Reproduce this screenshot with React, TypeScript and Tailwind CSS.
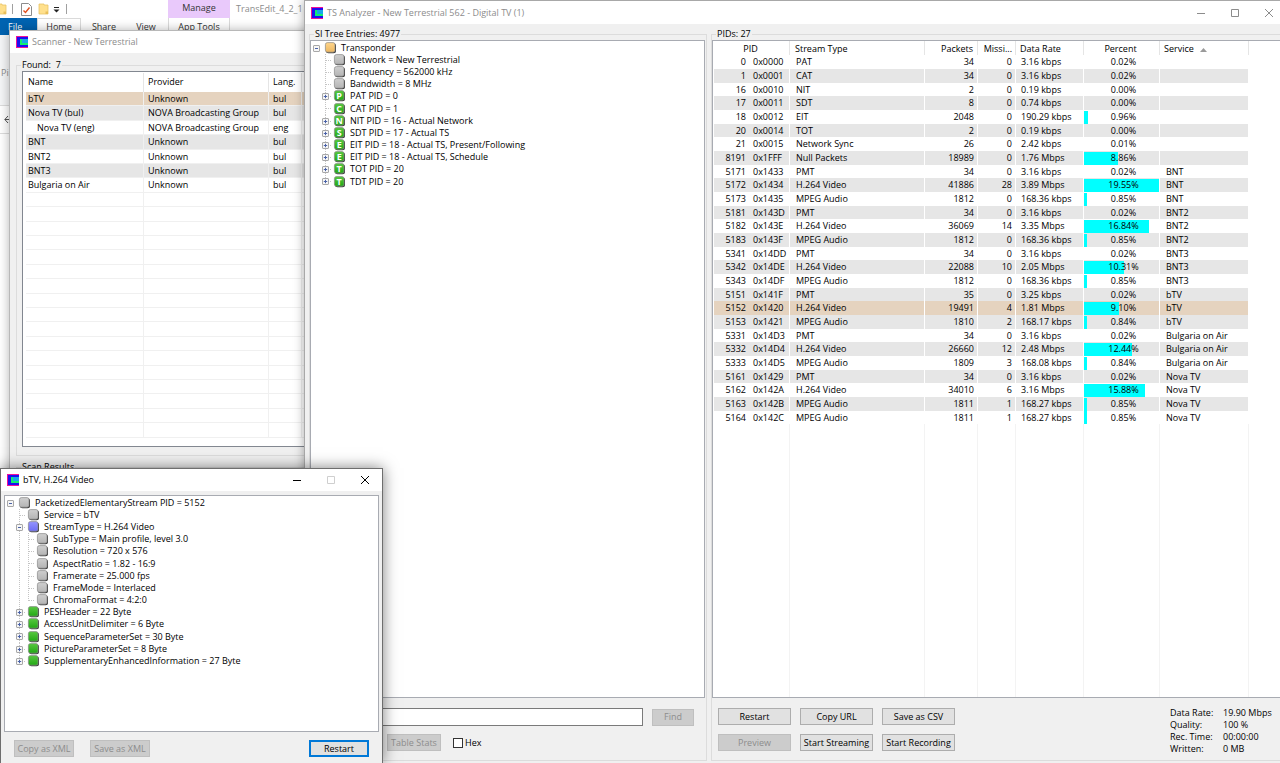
import type { ReactNode } from "react";

type Entry = {
  depth: number;
  text: string;
  color?: "gray" | "green" | "blue" | "orange";
  letter?: string;
  toggle?: "+" | "-";
  last?: boolean;
};

const siTree: Entry[] = [
  { depth: 0, text: "Transponder", color: "orange", toggle: "-" },
  { depth: 1, text: "Network = New Terrestrial" },
  { depth: 1, text: "Frequency = 562000 kHz" },
  { depth: 1, text: "Bandwidth = 8 MHz" },
  { depth: 1, text: "PAT PID = 0", color: "green", letter: "P", toggle: "+" },
  { depth: 1, text: "CAT PID = 1", color: "green", letter: "C" },
  { depth: 1, text: "NIT PID = 16 - Actual Network", color: "green", letter: "N", toggle: "+" },
  { depth: 1, text: "SDT PID = 17 - Actual TS", color: "green", letter: "S", toggle: "+" },
  { depth: 1, text: "EIT PID = 18 - Actual TS, Present/Following", color: "green", letter: "E", toggle: "+" },
  { depth: 1, text: "EIT PID = 18 - Actual TS, Schedule", color: "green", letter: "E", toggle: "+" },
  { depth: 1, text: "TOT PID = 20", color: "green", letter: "T", toggle: "+" },
  { depth: 1, text: "TDT PID = 20", color: "green", letter: "T", toggle: "+", last: true },
];

const streamTree: Entry[] = [
  { depth: 0, text: "PacketizedElementaryStream PID = 5152", toggle: "-" },
  { depth: 1, text: "Service = bTV" },
  { depth: 1, text: "StreamType = H.264 Video", color: "blue", toggle: "-" },
  { depth: 2, text: "SubType = Main profile, level 3.0" },
  { depth: 2, text: "Resolution = 720 x 576" },
  { depth: 2, text: "AspectRatio = 1.82 - 16:9" },
  { depth: 2, text: "Framerate = 25.000 fps" },
  { depth: 2, text: "FrameMode = Interlaced" },
  { depth: 2, text: "ChromaFormat = 4:2:0", last: true },
  { depth: 1, text: "PESHeader = 22 Byte", color: "green", toggle: "+" },
  { depth: 1, text: "AccessUnitDelimiter = 6 Byte", color: "green", toggle: "+" },
  { depth: 1, text: "SequenceParameterSet = 30 Byte", color: "green", toggle: "+" },
  { depth: 1, text: "PictureParameterSet = 8 Byte", color: "green", toggle: "+" },
  { depth: 1, text: "SupplementaryEnhancedInformation = 27 Byte", color: "green", toggle: "+", last: true },
];

// pid, hex, type, packets, missing, rate, percent, service
const pids: [number, string, string, number, number, string, string, string][] = [
  [0, "0x0000", "PAT", 34, 0, "3.16 kbps", "0.02", ""],
  [1, "0x0001", "CAT", 34, 0, "3.16 kbps", "0.02", ""],
  [16, "0x0010", "NIT", 2, 0, "0.19 kbps", "0.00", ""],
  [17, "0x0011", "SDT", 8, 0, "0.74 kbps", "0.00", ""],
  [18, "0x0012", "EIT", 2048, 0, "190.29 kbps", "0.96", ""],
  [20, "0x0014", "TOT", 2, 0, "0.19 kbps", "0.00", ""],
  [21, "0x0015", "Network Sync", 26, 0, "2.42 kbps", "0.01", ""],
  [8191, "0x1FFF", "Null Packets", 18989, 0, "1.76 Mbps", "8.86", ""],
  [5171, "0x1433", "PMT", 34, 0, "3.16 kbps", "0.02", "BNT"],
  [5172, "0x1434", "H.264 Video", 41886, 28, "3.89 Mbps", "19.55", "BNT"],
  [5173, "0x1435", "MPEG Audio", 1812, 0, "168.36 kbps", "0.85", "BNT"],
  [5181, "0x143D", "PMT", 34, 0, "3.16 kbps", "0.02", "BNT2"],
  [5182, "0x143E", "H.264 Video", 36069, 14, "3.35 Mbps", "16.84", "BNT2"],
  [5183, "0x143F", "MPEG Audio", 1812, 0, "168.36 kbps", "0.85", "BNT2"],
  [5341, "0x14DD", "PMT", 34, 0, "3.16 kbps", "0.02", "BNT3"],
  [5342, "0x14DE", "H.264 Video", 22088, 10, "2.05 Mbps", "10.31", "BNT3"],
  [5343, "0x14DF", "MPEG Audio", 1812, 0, "168.36 kbps", "0.85", "BNT3"],
  [5151, "0x141F", "PMT", 35, 0, "3.25 kbps", "0.02", "bTV"],
  [5152, "0x1420", "H.264 Video", 19491, 4, "1.81 Mbps", "9.10", "bTV"],
  [5153, "0x1421", "MPEG Audio", 1810, 2, "168.17 kbps", "0.84", "bTV"],
  [5331, "0x14D3", "PMT", 34, 0, "3.16 kbps", "0.02", "Bulgaria on Air"],
  [5332, "0x14D4", "H.264 Video", 26660, 12, "2.48 Mbps", "12.44", "Bulgaria on Air"],
  [5333, "0x14D5", "MPEG Audio", 1809, 3, "168.08 kbps", "0.84", "Bulgaria on Air"],
  [5161, "0x1429", "PMT", 34, 0, "3.16 kbps", "0.02", "Nova TV"],
  [5162, "0x142A", "H.264 Video", 34010, 6, "3.16 Mbps", "15.88", "Nova TV"],
  [5163, "0x142B", "MPEG Audio", 1811, 1, "168.27 kbps", "0.85", "Nova TV"],
  [5164, "0x142C", "MPEG Audio", 1811, 1, "168.27 kbps", "0.85", "Nova TV"],
];
const selectedPid = 5152;
const maxPercent = 19.55;

const channels = [
  ["bTV", "Unknown", "bul"],
  ["Nova TV (bul)", "NOVA Broadcasting Group", "bul"],
  ["Nova TV (eng)", "NOVA Broadcasting Group", "eng"],
  ["BNT", "Unknown", "bul"],
  ["BNT2", "Unknown", "bul"],
  ["BNT3", "Unknown", "bul"],
  ["Bulgaria on Air", "Unknown", "bul"],
];
const emptyRows = Array.from({ length: 17 }, (_, i) => i);

const stats = [
  ["Data Rate:", "19.90 Mbps"],
  ["Quality:", "100 %"],
  ["Rec. Time:", "00:00:00"],
  ["Written:", "0 MB"],
];

// light top, darker bottom
const nodeColors = {
  gray: ["#cfcfcf", "#b4b4b4"],
  green: ["#58c840", "#22a814"],
  blue: ["#9494ff", "#6c6cf4"],
  orange: ["#ffd68c", "#ecb660"],
};

function AppIcon() {
  return (
    <svg width="12" height="12" viewBox="0 0 12 12" shapeRendering="crispEdges" aria-hidden="true">
      <rect width="12" height="12" fill="#f0109a" />
      <rect x="1" y="1" width="11" height="10" fill="#1c10f0" />
      <rect x="4" y="3" width="8" height="6" fill="#10f070" />
      <rect x="6" y="3" width="6" height="4" fill="#18a8e8" />
    </svg>
  );
}

function Folder() {
  return (
    <svg width="11" height="12" viewBox="0 0 11 12" aria-hidden="true">
      <path d="M1 1h5v1h4v9H1z" fill="#ffe08c" stroke="#e8c468" strokeWidth="0.8" />
      <path d="M7.5 8.5H10V11H7.5z" fill="#e8bf58" />
    </svg>
  );
}

function WindowControls({ active }: { active?: boolean }) {
  return (
    <div className={`flex items-center gap-6 ${active ? "text-black" : "text-[#8c8c8c]"}`}>
      <button aria-label="Minimize">
        <svg className="block" width="10" height="10" viewBox="0 0 10 10" stroke="currentColor">
          <path d="M1 5.5h8" />
        </svg>
      </button>
      <button aria-label="Maximize" className={active ? "text-[#cfcfcf]" : ""}>
        <svg className="block" width="10" height="10" viewBox="0 0 10 10" fill="none" stroke="currentColor">
          <path d="M1.5 1.5h7v7h-7z" />
        </svg>
      </button>
      <button aria-label="Close">
        <svg className="block" width="10" height="10" viewBox="0 0 10 10" stroke="currentColor">
          <path d="M1 1l8 8M9 1L1 9" />
        </svg>
      </button>
    </div>
  );
}

function Toggle({ sign }: { sign: "+" | "-" }) {
  return (
    <svg className="relative block" width="9" height="12" viewBox="0 0 9 12" aria-hidden="true">
      <rect x="1.5" y="3.5" width="6" height="6" rx="0.5" fill="#f6f6f6" stroke="#a8a8a8" />
      <path d={sign === "+" ? "M2.8 6.5h3.4M4.5 4.8v3.4" : "M3 6.5h3"} stroke="#4a62a8" />
    </svg>
  );
}

function NodeIcon({ color, letter }: { color: keyof typeof nodeColors; letter?: string }) {
  const [top, bottom] = nodeColors[color];
  return (
    <svg className="block shrink-0 overflow-visible" width="11" height="12" viewBox="0 0 11 12" aria-hidden="true">
      <defs>
        <linearGradient id={`node-${color}`} x1="0" y1="0" x2="0" y2="1">
          <stop offset="0" stopColor={top} />
          <stop offset="1" stopColor={bottom} />
        </linearGradient>
      </defs>
      <rect x="1" y="1.2" width="10" height="10" rx="2.5" fill="#3c3c3c" />
      <rect x="0.4" y="0.6" width="9.6" height="9.6" rx="2" fill={`url(#node-${color})`} stroke="#8a8a8a" strokeWidth="0.7" />
      {letter && (
        <text x="5.2" y="9" textAnchor="middle" fill="#fff" fontSize="9" fontWeight="bold">
          {letter}
        </text>
      )}
    </svg>
  );
}

function Tree({ entries, label }: { entries: Entry[]; label: string }) {
  return (
    <ul aria-label={label} className="px-px pt-px">
      {entries.map((e, i) => (
        <li key={i} className="flex h-3 items-center whitespace-nowrap nth-[6n]:h-[13px]">
          {e.depth > 0 && <span className="w-[9px]" />}
          {e.depth > 1 && (
            <svg className="block" width="9" height="13" viewBox="0 0 9 13" aria-hidden="true">
              <path d="M4.5 0v13" stroke="#c4c4c4" strokeDasharray="1 1" />
            </svg>
          )}
          <span className="grid w-[13px]">
            {e.depth > 0 && (
              <svg className="col-start-1 row-start-1 block" width="13" height="13" viewBox="0 0 13 13" aria-hidden="true">
                <path d={e.last ? "M4.5 0v7M5 6.5h5" : "M4.5 0v13M5 6.5h5"} fill="none" stroke="#c4c4c4" strokeDasharray="1 1" />
              </svg>
            )}
            {e.toggle && (
              <span className="col-start-1 row-start-1">
                <Toggle sign={e.toggle} />
              </span>
            )}
          </span>
          <NodeIcon color={e.color ?? "gray"} letter={e.letter} />
          <span className="pl-[5px]">{e.text}</span>
        </li>
      ))}
    </ul>
  );
}

function Button({ children, className = "", disabled, primary }: { children: ReactNode; className?: string; disabled?: boolean; primary?: boolean }) {
  const look = disabled
    ? "border border-[#bfbfbf] bg-[#cccccc] text-[#8c8c8c]"
    : primary
      ? "border-2 border-[#0078d7] bg-[#e1e1e1]"
      : "border border-[#adadad] bg-[#e1e1e1]";
  return (
    <button disabled={disabled} className={`flex h-[17px] items-center justify-center whitespace-nowrap ${look} ${className}`}>
      {children}
    </button>
  );
}

function GroupBox({ title, className = "", children }: { title: string; className?: string; children: ReactNode }) {
  return (
    <fieldset className={`flex min-w-0 flex-col border border-[#dcdcdc] ${className}`}>
      <legend className="ml-1 h-3 px-px whitespace-pre">{title}</legend>
      {children}
    </fieldset>
  );
}

function Explorer() {
  return (
    <div className="flex h-full flex-col bg-white text-[#333]">
      <div className="flex h-[18px] items-center">
        <div className="flex w-[168px] items-center">
          <span className="-ml-1 flex items-center"><Folder /></span>
          <span className="ml-[5px] h-2.5 w-px bg-[#a0a0a0]" />
          <svg className="ml-2 block" width="11" height="13" viewBox="0 0 11 13" fill="none" aria-hidden="true">
            <path d="M.5.5h7l3 3v9H.5z" fill="#fff" stroke="#8c8c8c" />
            <path d="M2.5 7.5l2 2 4-5" stroke="#e0501e" strokeWidth="1.4" />
          </svg>
          <span className="ml-1.5"><Folder /></span>
          <svg className="ml-1 block" width="7" height="7" viewBox="0 0 7 7" aria-hidden="true">
            <path d="M1 1.5h5" stroke="#222" />
            <path d="M.5 3.5h6L3.5 6.5z" fill="#222" />
          </svg>
          <span className="ml-1.5 h-2.5 w-px bg-[#a0a0a0]" />
        </div>
        <div className="h-full w-[62px] bg-[#e9c9fb] pt-0.5 text-center">Manage</div>
        <div className="ml-1.5 text-[#8c8c8c]">TransEdit_4_2_1</div>
      </div>
      <div className="flex h-[17px]">
        <div className="w-[37px] bg-[#0063b1] pt-[3px] pl-2 text-white">File</div>
        <div className="w-11 border-x border-t border-[#dadada] pt-0.5 text-center">Home</div>
        <div className="w-[46px] pt-[3px] text-center">Share</div>
        <div className="w-[38px] pt-[3px] text-center">View</div>
        <div className="ml-[3px] w-[62px] border-x border-[#dadada] pt-[3px] text-center">App Tools</div>
      </div>
      <div className="h-[71px] border-b border-[#dcdcdc] bg-[#f5f6f7] pt-8 pl-px text-[#8c8c8c]">Pin</div>
      <div className="flex h-7 items-center border-b border-[#dcdcdc] pl-1">
        <svg width="8" height="9" viewBox="0 0 8 9" fill="none" stroke="#555" aria-hidden="true">
          <path d="M8 4.5H1M4 1L.8 4.5 4 8" />
        </svg>
      </div>
    </div>
  );
}

function Scanner() {
  const cell = "truncate border-r border-b border-[#f0f0f0] py-0 pl-1 first:pl-0.5";
  return (
    <section className="absolute top-[30px] bottom-0 left-[9px] w-[302px] border border-[#b8b8b8] bg-[#f0f0f0] shadow-[0_0_10px_rgba(0,0,0,0.3)]">
      <header className="flex h-[22px] items-center bg-white pl-1.5 text-[#8c8c8c]">
        <AppIcon />
        <h2 className="ml-1">Scanner - New Terrestrial</h2>
      </header>
      <GroupBox title="Found:  7" className="mt-1.5 ml-1.5 h-[397px]">
        <div className="mb-2 ml-[5px] flex-1 overflow-hidden border border-r-0 border-[#828790] bg-white pt-px pl-[3px]">
          <table className="w-[300px] table-fixed border-separate border-spacing-0">
            <colgroup>
              <col className="w-[118px]" />
              <col className="w-[125px]" />
              <col className="w-[33px]" />
              <col />
            </colgroup>
            <thead>
              <tr className="h-[19px] text-left">
                {["Name", "Provider", "Lang.", ""].map((h) => (
                  <th key={h} className="border-r border-[#e5e5e5] p-0 pb-0.5 pl-1 font-normal first:pl-0.5">{h}</th>
                ))}
              </tr>
            </thead>
            <tbody>
              {channels.map(([name, provider, lang], i) => (
                <tr
                  key={name}
                  className={`h-3.5 nth-[5n+2]:h-[15px] nth-[5n+4]:h-[15px] ${i === 0 ? "bg-[#e5d3bf]" : i % 2 ? "bg-[#e6e6e6]" : ""}`}
                >
                  <td className={`${cell} ${i === 2 ? "indent-[9px]" : ""}`}>{name}</td>
                  <td className={cell}>{provider}</td>
                  <td className={cell}>{lang}</td>
                  <td className={cell} />
                </tr>
              ))}
              {emptyRows.map((n) => (
                <tr key={n} className="h-3.5 nth-[5n+2]:h-[15px] nth-[5n+4]:h-[15px]">
                  <td className={cell} />
                  <td className={cell} />
                  <td className={cell} />
                  <td className={cell} />
                </tr>
              ))}
            </tbody>
          </table>
        </div>
      </GroupBox>
      <GroupBox title="Scan Results" className="mt-[5px] ml-1.5 h-40">
        <div />
      </GroupBox>
    </section>
  );
}

function PidTable() {
  const cell = "overflow-hidden border-r border-white p-0 whitespace-nowrap";
  const head = "border-r border-[#e5e5e5] p-0 pt-0.5 font-normal whitespace-nowrap";
  return (
    <table className="h-full w-[535px] table-fixed border-separate border-spacing-0">
      <colgroup>
        <col className="w-[76px]" />
        <col className="w-[135px]" />
        <col className="w-[53px]" />
        <col className="w-[38px]" />
        <col className="w-[68px]" />
        <col className="w-[76px]" />
        <col className="w-[89px]" />
      </colgroup>
      <thead>
        <tr className="h-3.5">
          <th className={`${head} pr-0.5 text-center`}>PID</th>
          <th className={`${head} pl-[5px] text-left`}>Stream Type</th>
          <th className={`${head} pr-1 text-right`}>Packets</th>
          <th className={`${head} pr-[3px] text-right`}>Missi...</th>
          <th className={`${head} pl-1 text-left`}>Data Rate</th>
          <th className={`${head} pr-0.5 text-center`}>Percent</th>
          <th className={`${head} pl-1 text-left`}>
            Service
            <svg className="ml-1.5 inline-block" width="7" height="4" viewBox="0 0 7 4" aria-hidden="true">
              <path d="M0 4h7L3.5 0z" fill="#9a9a9a" />
            </svg>
          </th>
        </tr>
      </thead>
      <tbody>
        {pids.map(([pid, hex, type, packets, missing, rate, percent, service], i) => (
          <tr
            key={pid}
            className={`h-3.5 nth-[3n]:h-[13px] ${pid === selectedPid ? "bg-[#e5d3bf]" : i % 2 ? "bg-[#e6e6e6]" : ""}`}
          >
            <td className={cell}>
              <div className="flex gap-[7px]">
                <span className="w-8 text-right">{pid}</span>
                <span>{hex}</span>
              </div>
            </td>
            <td className={`${cell} pl-1.5`}>{type}</td>
            <td className={`${cell} pr-[3px] text-right`}>{packets}</td>
            <td className={`${cell} pr-[3px] text-right`}>{missing}</td>
            <td className={`${cell} pl-[5px]`}>{rate}</td>
            <td className={cell}>
              <div className="grid h-[13px] items-center text-center">
                {Number(percent) > 0.1 && (
                  <span
                    className="col-start-1 row-start-1 h-full bg-[#00ffff]"
                    style={{ width: `${(Number(percent) / maxPercent) * 100}%` }}
                  />
                )}
                <span className="col-start-1 row-start-1 pl-1">{percent}%</span>
              </div>
            </td>
            <td className={`${cell} pl-1.5`}>{service}</td>
          </tr>
        ))}
        <tr>
          {[0, 1, 2, 3, 4, 5, 6].map((n) => (
            <td key={n} className="border-r border-[#f3f3f3] p-0" />
          ))}
        </tr>
      </tbody>
    </table>
  );
}

function Analyzer() {
  return (
    <section className="absolute inset-y-0 right-0 left-[304px] flex flex-col border-t border-l border-[#a8a8a8] bg-[#f0f0f0] shadow-[0_0_10px_rgba(0,0,0,0.35)]">
      <header className="flex h-[23px] items-center bg-white px-1.5 text-[#8c8c8c]">
        <AppIcon />
        <h2 className="ml-1 flex-1">TS Analyzer - New Terrestrial 562 - Digital TV (1)</h2>
        <WindowControls />
      </header>
      <div className="flex min-h-0 flex-1 gap-1 pt-1 pb-0.5 pl-1">
        <GroupBox title="SI Tree Entries: 4977" className="w-[398px]">
          <div className="mr-px min-h-0 flex-1 border border-[#a8abb2] bg-white">
            <Tree entries={siTree} label="SI tree" />
          </div>
          <div className="flex items-center gap-[9px] pt-2.5 pr-3 pl-2.5">
            <input aria-label="Find text" className="h-[18px] min-w-0 flex-1 border border-[#7a7a7a] bg-white px-1 outline-none" />
            <Button disabled className="w-[42px]">Find</Button>
          </div>
          <div className="flex items-center pt-2 pb-[9px] pl-[77px]">
            <Button disabled className="w-[54px]">Table Stats</Button>
            <label className="ml-3 flex items-center gap-0.5">
              <input type="checkbox" className="size-[10px] appearance-none border border-[#333] bg-white" />
              Hex
            </label>
          </div>
        </GroupBox>
        <GroupBox title="PIDs: 27" className="flex-1 border-r-0">
          <div className="min-h-0 flex-1 overflow-hidden border border-r-0 border-[#a8abb2] bg-white pl-px">
            <PidTable />
          </div>
          <div className="flex items-end justify-between pt-[9px] pr-3 pb-[5px] pl-1.5">
            <div className="grid grid-cols-[repeat(3,73px)] gap-[9px] pb-1">
              <Button>Restart</Button>
              <Button>Copy URL</Button>
              <Button>Save as CSV</Button>
              <Button disabled>Preview</Button>
              <Button>Start Streaming</Button>
              <Button>Start Recording</Button>
            </div>
            <dl className="grid auto-rows-[12px] grid-cols-[53px_45px]">
              {stats.map(([k, v]) => (
                <div key={k} className="contents whitespace-nowrap">
                  <dt>{k}</dt>
                  <dd>{v}</dd>
                </div>
              ))}
            </dl>
          </div>
        </GroupBox>
      </div>
    </section>
  );
}

function StreamDetails() {
  return (
    <section className="absolute bottom-0 left-0 flex h-[295px] w-[383px] flex-col border border-b-0 border-[#6e6e6e] bg-[#f0f0f0] shadow-[0_0_14px_rgba(0,0,0,0.5)]">
      <header className="flex h-[22px] items-center bg-white pr-3 pl-1.5">
        <AppIcon />
        <h2 className="ml-1 flex-1">bTV, H.264 Video</h2>
        <WindowControls active />
      </header>
      <div className="mx-[3px] mt-1 flex-1 border border-[#a8abb2] bg-white">
        <Tree entries={streamTree} label="Stream details" />
      </div>
      <div className="flex gap-4 px-[13px] pt-2 pb-1.5">
        <Button disabled className="w-[60px]">Copy as XML</Button>
        <Button disabled className="w-[60px]">Save as XML</Button>
        <Button primary className="ml-auto w-[60px]">Restart</Button>
      </div>
    </section>
  );
}

export default function App() {
  return (
    <main className="relative h-screen overflow-hidden bg-white font-['Open_Sans',sans-serif] text-[9px] leading-3 text-black">
      <Explorer />
      <Scanner />
      <Analyzer />
      <StreamDetails />
    </main>
  );
}
